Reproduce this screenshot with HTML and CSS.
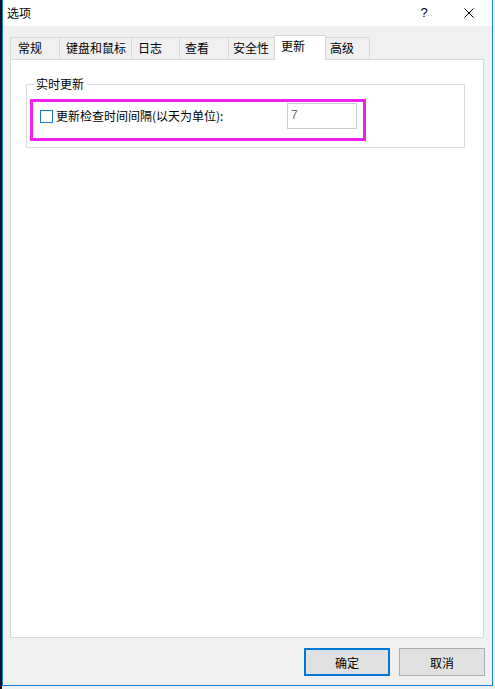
FILE: index.html
```html
<!DOCTYPE html>
<html lang="zh-CN">
<head>
<meta charset="utf-8">
<title>选项</title>
<link rel="stylesheet" href="styles.css">
</head>
<body>
<div class="strip"></div>
<div class="window">
  <div class="titlebar">
    <span class="title">选项</span>
    <div class="title-buttons">
      <span class="help">?</span>
      <span class="close"><svg width="10" height="10" viewBox="0 0 10 10"><path d="M0.5 0.5L9.5 9.5M9.5 0.5L0.5 9.5" stroke="#000" stroke-width="1" fill="none"/></svg></span>
    </div>
  </div>
  <div class="content">
    <div class="tabs">
      <div class="tab t1">常规</div>
      <div class="tab t2">键盘和鼠标</div>
      <div class="tab t3">日志</div>
      <div class="tab t4">查看</div>
      <div class="tab t5">安全性</div>
      <div class="tab t6 selected">更新</div>
      <div class="tab t7">高级</div>
    </div>
    <div class="panel">
      <fieldset class="group">
        <legend class="legend">实时更新</legend>
        <div class="highlight">
          <input type="checkbox" class="check">
          <label class="label">更新检查时间间隔(以天为单位):</label>
          <input class="num" type="text" value="7" disabled>
        </div>
      </fieldset>
    </div>
    <div class="buttons">
      <button class="btn primary">确定</button>
      <button class="btn">取消</button>
    </div>
  </div>
</div>
</body>
</html>
```
FILE: styles.css
```css
* { box-sizing: border-box; }
html, body { margin: 0; padding: 0; }
body {
  width: 495px;
  height: 689px;
  overflow: hidden;
  background: #f0f0f0;
  display: flex;
  font-family: "Noto Sans CJK SC", sans-serif;
  font-size: 12px;
  color: #000;
}
.strip {
  width: 2px;
  height: 689px;
  background: #0e1620;
  flex: none;
}
.window {
  width: 491px;
  height: 686px;
  border: 1px solid #1a7fd4;
  border-top: none;
  background: #f0f0f0;
  display: flex;
  flex-direction: column;
  flex: none;
}
.titlebar {
  height: 26px;
  background: #fff;
  display: flex;
  align-items: center;
  flex: none;
}
.title {
  padding-left: 4px;
  font-size: 12px;
  line-height: 16px;
}
.title-buttons {
  margin-left: auto;
  display: flex;
  align-items: center;
  height: 26px;
}
.help {
  width: 44px;
  text-align: center;
  font-family: "Liberation Sans", sans-serif;
  font-size: 13px;
  line-height: 16px;
}
.close {
  width: 46px;
  height: 26px;
  display: flex;
  align-items: center;
  justify-content: center;
}
.content {
  flex: 1;
  padding: 9px 8px 0 7px;
  display: flex;
  flex-direction: column;
}
.tabs {
  height: 24px;
  display: flex;
  align-items: flex-end;
  flex: none;
}
.tab {
  height: 22px;
  border: 1px solid #d9d9d9;
  border-bottom: none;
  background: #f0f0f0;
  line-height: 20px;
  padding-left: 6px;
  white-space: nowrap;
  margin-left: -1px;
}
.t1 { width: 50px; margin-left: 0; padding-left: 7px; }
.t2 { width: 73px; }
.t3 { width: 49px; }
.t4 { width: 50px; padding-left: 5px; }
.t5 { width: 47px; padding-left: 4px; }
.t6 { width: 52px; }
.t7 { width: 45px; padding-left: 4px; }
.tab.selected {
  height: 25px;
  margin-bottom: -1px;
  background: #fff;
  position: relative;
  z-index: 1;
  line-height: 20px;
}
.t6 + .t7 { margin-left: -1px; }
.panel {
  height: 579px;
  background: #fff;
  border: 1px solid #d9d9d9;
  flex: none;
}
.group {
  margin: 16px 18px 0 15px;
  padding: 0 0 6px 3px;
  border: 1px solid #dcdcdc;
  min-width: 0;
}
.legend {
  padding: 0 2px;
  margin-left: 4px;
  line-height: 16px;
}
.highlight {
  width: 336px;
  height: 42px;
  margin-top: 7px;
  border: 3px solid #f020f0;
  padding: 1px 0 9px 7px;
  display: flex;
  align-items: center;
}
.check {
  appearance: none;
  -webkit-appearance: none;
  width: 13px;
  height: 13px;
  margin: 0 3px 0 0;
  border: 1px solid #1a7ad0;
  background: #fff;
  flex: none;
}
.label {
  width: 231px;
  flex: none;
  line-height: 16px;
}
.num {
  width: 70px;
  height: 26px;
  border: 1px solid #cccccc;
  background: #fff;
  color: #6d6d6d;
  font-family: "Liberation Sans", sans-serif;
  font-size: 12px;
  padding: 4px 3px 6px 3px;
  margin: 0;
  flex: none;
}
.buttons {
  margin-top: 10px;
  display: flex;
  justify-content: flex-end;
  gap: 9px;
  padding-right: 0;
  margin-right: -1px;
}
.btn {
  width: 86px;
  height: 28px;
  background: #e1e1e1;
  border: 1px solid #adadad;
  font-family: "Noto Sans CJK SC", sans-serif;
  font-size: 12px;
  color: #000;
  padding: 0;
  margin: 0;
  border-radius: 0;
}
.btn.primary {
  border: 2px solid #0078d7;
}
```
